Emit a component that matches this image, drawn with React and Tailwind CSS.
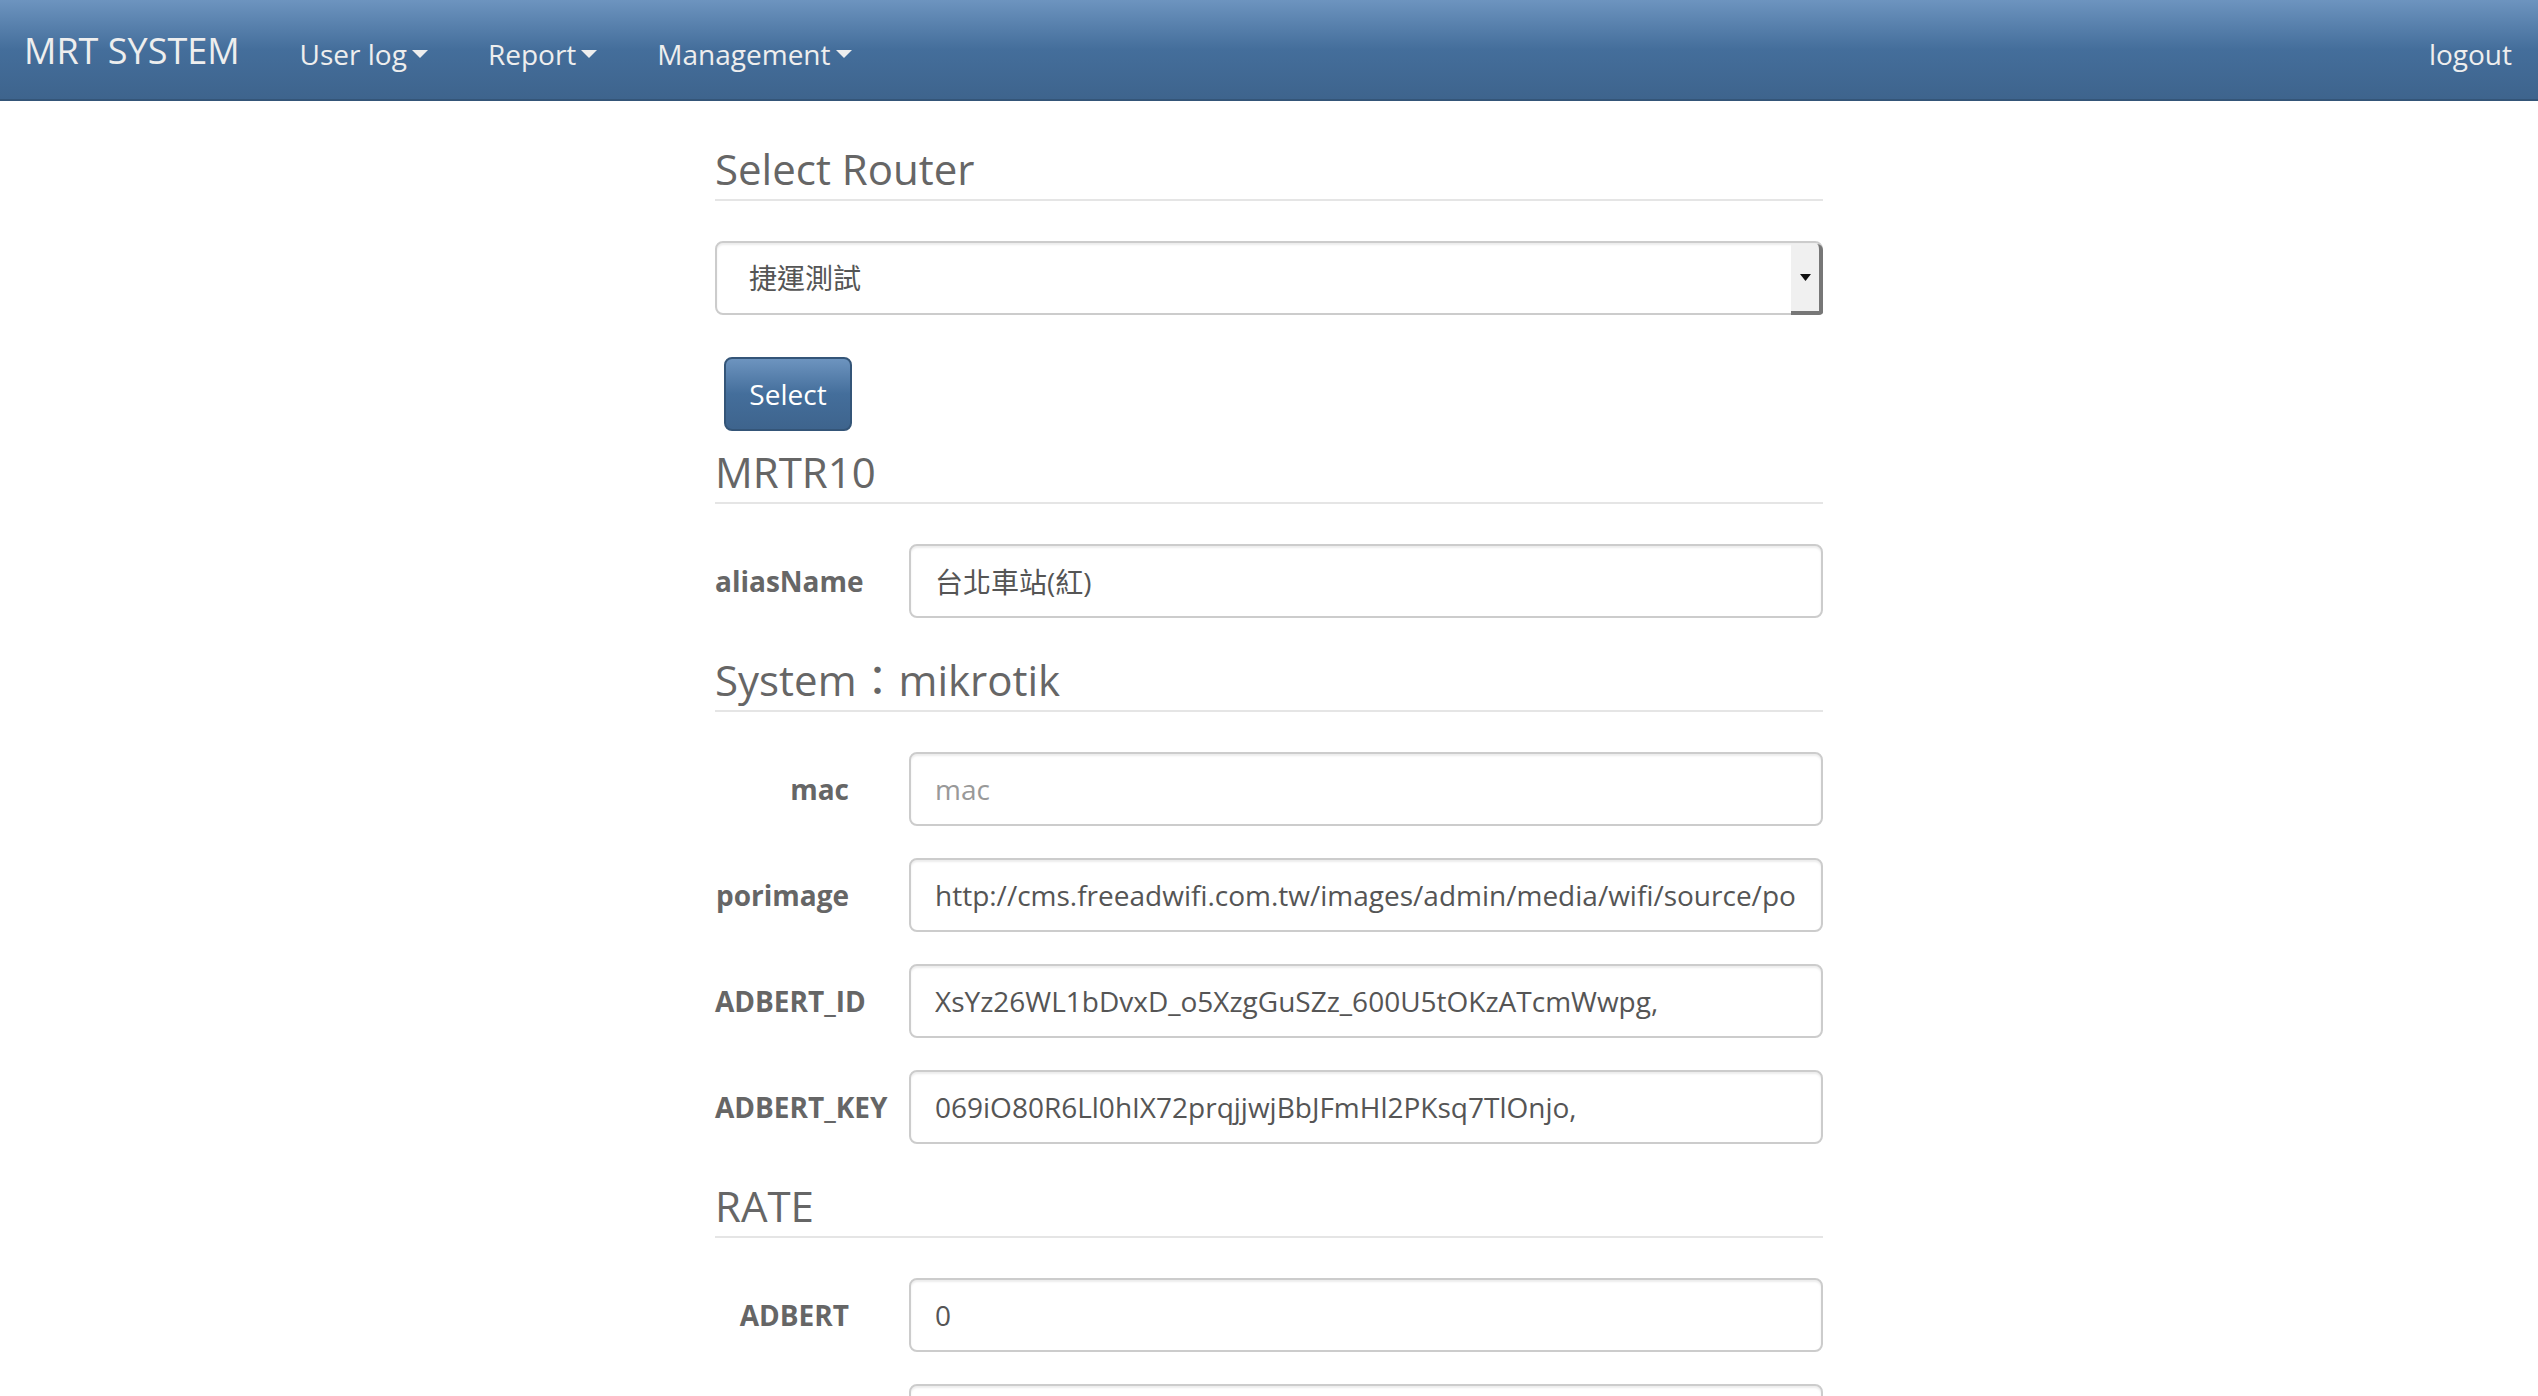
import React from "react";

function Caret() {
  return (
    <span className="inline-block w-0 h-0 ml-[5px] align-middle border-x-[8px] border-x-transparent border-t-[8px] border-t-[#eeeeee]" />
  );
}

function Legend({ children, className = "" }) {
  return (
    <div
      className={
        "text-[42px] leading-[60px] text-[#666666] border-b-2 border-[#e5e5e5] mb-[40px] " +
        className
      }
    >
      {children}
    </div>
  );
}

function Row({ label, value, placeholder, last }) {
  return (
    <div className={"flex items-center " + (last ? "" : "mb-[32px]")}>
      <label className="w-[134px] shrink-0 text-right font-bold whitespace-nowrap text-[#666666]">
        {label}
      </label>
      <input
        readOnly
        defaultValue={value}
        placeholder={placeholder}
        className="ml-[60px] flex-1 min-w-0 h-[74px] px-[24px] border-2 border-[#cccccc] rounded-[8px] bg-white text-[#555555] placeholder:text-[#999999] shadow-[inset_0_2px_2px_rgba(0,0,0,0.075)] outline-none"
      />
    </div>
  );
}

export default function App() {
  return (
    <div className="min-h-screen bg-white font-['Open_Sans','Noto_Sans_CJK_TC',sans-serif] text-[28px] leading-[40px] text-[#666666]">
      <nav className="h-[101px] flex items-center pt-[3px] bg-[linear-gradient(#6d94bf,#446e9b_50%,#3e648d)] border-b-2 border-[#345578]">
        <span className="pl-[24px] pr-[30px] text-[36px] text-[#eeeeee]">MRT SYSTEM</span>
        <span className="px-[30px] pt-[6px] text-[#eeeeee] flex items-center">
          User log
          <Caret />
        </span>
        <span className="px-[30px] pt-[6px] text-[#eeeeee] flex items-center">
          Report
          <Caret />
        </span>
        <span className="px-[30px] pt-[6px] text-[#eeeeee] flex items-center">
          Management
          <Caret />
        </span>
        <span className="ml-auto pr-[26px] pt-[6px] text-[#eeeeee]">logout</span>
      </nav>

      <main className="w-[1108px] mx-auto pt-[38px]">
        <Legend>Select Router</Legend>

        <div className="flex items-stretch h-[74px] border-2 border-[#cccccc] rounded-[8px] bg-white shadow-[inset_0_2px_2px_rgba(0,0,0,0.075)]">
          <div className="flex-1 flex items-center pl-[32px] text-[#555555]">捷運測試</div>
          <div className="w-[32px] -mr-[2px] -mb-[2px] mt-[1px] bg-[#f0f0f0] border-r-[4px] border-b-[4px] border-[#777777] rounded-tr-[6px] rounded-br-[4px] flex items-center justify-center">
            <svg width="11" height="7" viewBox="0 0 11 7">
              <polygon points="0,0 11,0 5.5,7" fill="#111111" />
            </svg>
          </div>
        </div>

        <button className="mt-[42px] ml-[9px] h-[74px] w-[128px] rounded-[8px] border-2 border-[#345578] bg-[linear-gradient(#6d94bf,#446e9b_50%,#3e648d)] text-white text-[28px]">
          Select
        </button>

        <Legend className="mt-[11px]">MRTR10</Legend>
        <Row label="aliasName" value="台北車站(紅)" />

        <Legend>System：mikrotik</Legend>
        <Row label="mac" value="" placeholder="mac" />
        <Row label="porimage" value="http://cms.freeadwifi.com.tw/images/admin/media/wifi/source/portal_bg.jpg" />
        <Row label="ADBERT_ID" value="XsYz26WL1bDvxD_o5XzgGuSZz_600U5tOKzATcmWwpg," />
        <Row label="ADBERT_KEY" value="069iO80R6Ll0hIX72prqjjwjBbJFmHl2PKsq7TlOnjo," />

        <Legend>RATE</Legend>
        <Row label="ADBERT" value="0" />
        <Row label="" value="0" />
        <Row label="" value="0" last />
        <div className="h-[60px]" />
      </main>
    </div>
  );
}
